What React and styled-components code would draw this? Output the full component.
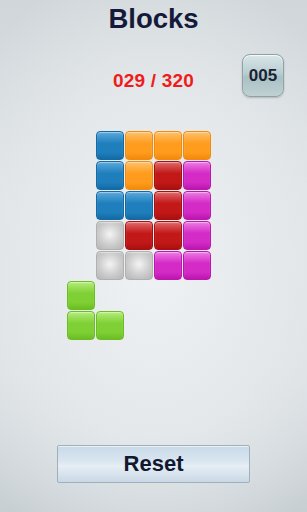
import React from "react";
import styled, { createGlobalStyle, css } from "styled-components";

const Global = createGlobalStyle`
  html, body { margin: 0; padding: 0; }
  body { font-family: "Liberation Sans", Arial, sans-serif; }
`;

const Screen = styled.div`
  width: 307px;
  height: 512px;
  box-sizing: border-box;
  display: flex;
  flex-direction: column;
  align-items: center;
  overflow: hidden;
  background:
    radial-gradient(ellipse 75% 60% at 50% 52%, #eff2f4 0%, #e4e8eb 55%, rgba(210,217,221,0) 100%),
    linear-gradient(180deg, #d0d6d9 0%, #dde2e5 40%, #dbe0e3 70%, #c8cfd3 100%);
`;

const Title = styled.h1`
  margin: 3px 0 0;
  font-size: 27.5px;
  line-height: 32px;
  font-weight: 700;
  color: #151a3a;
`;

const HeaderRow = styled.div`
  width: 100%;
  display: grid;
  grid-template-columns: 1fr auto 1fr;
  align-items: center;
  margin-top: 19px;
`;

const Score = styled.div`
  grid-column: 2;
  font-size: 19px;
  font-weight: 700;
  color: #ee1c1c;
  letter-spacing: 0.2px;
  padding-top: 11px;
`;

const Level = styled.div`
  grid-column: 3;
  justify-self: end;
  margin-right: 23px;
  width: 42px;
  height: 43px;
  box-sizing: border-box;
  border-radius: 8px;
  border: 1px solid #8ea2a6;
  background: linear-gradient(180deg, #d9e6e8 0%, #b8cdd0 45%, #a9c1c4 55%, #bfd1d3 100%);
  box-shadow: inset 0 1px 1px rgba(255,255,255,.8), 0 1px 2px rgba(0,0,0,.2);
  display: grid;
  place-items: center;
  font-size: 17px;
  font-weight: 700;
  color: #1a2236;
`;

const Board = styled.div`
  display: grid;
  grid-template-columns: repeat(5, 28px);
  grid-template-rows: repeat(7, 29px);
  gap: 1px;
  margin-top: 34px;
  margin-left: -30px;
`;

const palette = {
  blue: ["#5ba9dc", "#1f7fbd", "#156aa3"],
  orange: ["#ffc16a", "#ff9c1e", "#f28a0c"],
  red: ["#e06a6a", "#c31818", "#a81010"],
  magenta: ["#ee7ae4", "#d42ac6", "#bc16ae"],
  gray: ["#e4e4e4", "#c6c6c6", "#b0b0b0"],
  green: ["#b4ec7a", "#7fd034", "#6bbd24"],
};

const Tile = styled.div`
  box-sizing: border-box;
  border-radius: 4px;
  grid-column: ${(p) => p.$c};
  grid-row: ${(p) => p.$r};
  ${(p) => {
    const [hi, mid, lo] = palette[p.$color];
    return css`
      border: 1px solid ${lo};
      background: linear-gradient(180deg, ${hi} 0%, ${mid} 42%, ${mid} 75%, ${lo} 100%);
      box-shadow: inset 0 1px 1px rgba(255,255,255,.45);
    `;
  }}
  ${(p) =>
    p.$color === "gray" &&
    css`
      background: radial-gradient(circle at 50% 45%, #f4f4f4 0%, #cdcdcd 55%, #b4b4b4 100%);
    `}
`;

const layout = [
  ["blue", "orange", "orange", "orange"],
  ["blue", "orange", "red", "magenta"],
  ["blue", "blue", "red", "magenta"],
  ["gray", "red", "red", "magenta"],
  ["gray", "gray", "magenta", "magenta"],
];

const piece = [
  { c: 1, r: 6 },
  { c: 1, r: 7 },
  { c: 2, r: 7 },
];

const Spacer = styled.div`
  flex: 1;
`;

const ResetButton = styled.button`
  appearance: none;
  width: 193px;
  height: 38px;
  margin-bottom: 29px;
  border: 1px solid #9fb0bd;
  border-radius: 2px;
  background: linear-gradient(180deg, #c8d9e8 0%, #dbe7f1 45%, #e6eef5 55%, #c9d8e5 100%);
  box-shadow: inset 0 1px 0 rgba(255,255,255,.6);
  font-family: "Liberation Sans", Arial, sans-serif;
  font-size: 22px;
  font-weight: 700;
  color: #121830;
  cursor: pointer;
`;

export default function App() {
  return (
    <Screen>
      <Global />
      <Title>Blocks</Title>
      <HeaderRow>
        <Score>029 / 320</Score>
        <Level>005</Level>
      </HeaderRow>
      <Board>
        {layout.map((row, r) =>
          row.map((color, c) => (
            <Tile key={`${r}-${c}`} $color={color} $c={c + 2} $r={r + 1} />
          ))
        )}
        {piece.map((p, i) => (
          <Tile key={`g${i}`} $color="green" $c={p.c} $r={p.r} />
        ))}
      </Board>
      <Spacer />
      <ResetButton>Reset</ResetButton>
    </Screen>
  );
}
